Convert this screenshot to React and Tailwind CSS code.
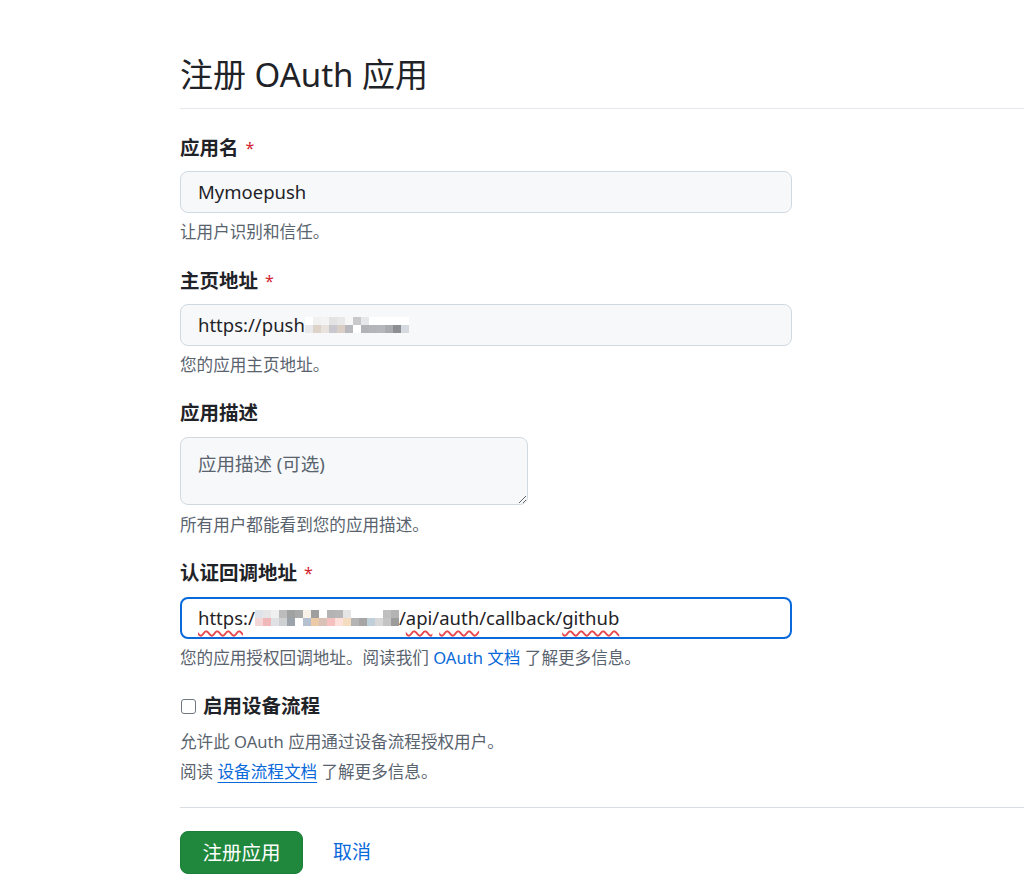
import { useState } from 'react';

// mosaic blocks standing in for the blurred part of the urls
function Pixelate({ rows }) {
  return (
    <span className="inline-flex flex-col align-middle">
      {rows.map((row, i) => (
        <span key={i} className="flex">
          {row.map((c, j) => (
            <span key={j} className="w-[8px] h-[8px]" style={{ backgroundColor: c }} />
          ))}
        </span>
      ))}
    </span>
  );
}

const homeBlur = [
  ['#ffffff', '#f1f1f1', '#f4f4f4', '#e3e3e3', '#e8e8e8', '#f7f7f7', '#c9c9cc', '#e5e7ea', '#ffffff', '#ffffff', '#ffffff', '#ffffff', '#ffffff'],
  ['#e9e9ec', '#ddd3c8', '#e9e3e0', '#c8c8ce', '#dacfc7', '#b9b9bd', '#ffffff', '#b1b3b8', '#b4b5b9', '#b6b7bc', '#a9abaf', '#8c8e92', '#d5d9e0'],
];

const cbBlur = [
  ['#dfe3ea', '#e6e6e6', '#f0f0f0', '#bcbcbc', '#a0a2a2', '#a9aaaa', '#f7f1e7', '#9f9f9f', '#ffffff', '#b4b4b4', '#b6b6b6', '#e5e5e5', '#ffffff', '#ffffff', '#ffffff', '#ffffff', '#bfbfbf', '#b4b4b4'],
  ['#f3d6d6', '#f0b8b8', '#dfe1e4', '#cfd0d2', '#9da3ad', '#ffffff', '#b5c1d0', '#eccaa8', '#d8c2b8', '#f5c0c0', '#fde0dc', '#f3dcc0', '#b4b4b4', '#a6a6a6', '#bfd0da', '#d8d8d8', '#c4c4c4', '#9c9c9c'],
];

function Label({ children, required }) {
  return (
    <label className="block text-[19.5px] leading-[28px] font-bold text-[#1f2328]">
      {children}
      {required && <span className="ml-[7px] text-[16px] font-normal text-[#d1242f] align-top">*</span>}
    </label>
  );
}

function Hint({ children, className = '' }) {
  return <p className={`text-[16.6px] leading-[24px] text-[#59636e] ${className}`}>{children}</p>;
}

const wavy = 'underline decoration-wavy decoration-[#e5484d] decoration-[1.5px] underline-offset-[5px]';

export default function App() {
  const [deviceFlow, setDeviceFlow] = useState(false);

  return (
    <div className="min-h-screen bg-white pl-[180px] font-['Noto_Sans','Noto_Sans_CJK_SC',sans-serif] text-[#1f2328]">
      <h1 className="pt-[51px] pb-[9px] border-b border-[#e5e8ec] text-[33px] leading-[48px] font-normal">
        注册 OAuth 应用
      </h1>

      <form className="w-[612px]" onSubmit={(e) => e.preventDefault()}>
        {/* App name */}
        <div className="mt-[25px]">
          <Label required>应用名</Label>
          <div className="mt-[9px] h-[42px] flex items-center px-[17px] rounded-[8px] border border-[#d1d9e0] bg-[#f6f8fa] text-[18.5px]">
            Mymoepush
          </div>
          <Hint className="mt-[7px]">让用户识别和信任。</Hint>
        </div>

        {/* Homepage */}
        <div className="mt-[23px]">
          <Label required>主页地址</Label>
          <div className="mt-[9px] h-[42px] flex items-center px-[17px] rounded-[8px] border border-[#d1d9e0] bg-[#f6f8fa] text-[18.5px]">
            <span>https://push</span>
            <Pixelate rows={homeBlur} />
          </div>
          <Hint className="mt-[7px]">您的应用主页地址。</Hint>
        </div>

        {/* Description */}
        <div className="mt-[22px]">
          <Label>应用描述</Label>
          <textarea
            placeholder="应用描述 (可选)"
            className="mt-[10px] block w-[348px] h-[68px] px-[17px] pt-[12px] rounded-[8px] border border-[#d1d9e0] bg-[#f6f8fa] text-[18.5px] leading-[28px] placeholder:text-[#59636e] outline-none"
          />
          <Hint className="mt-[8px]">所有用户都能看到您的应用描述。</Hint>
        </div>

        {/* Callback */}
        <div className="mt-[22px]">
          <Label required>认证回调地址</Label>
          <div className="mt-[10px] h-[42px] flex items-center px-[16px] rounded-[8px] border-2 border-[#0969da] bg-white text-[18.5px]">
            <span className={wavy}>https</span>
            <span>:/</span>
            <Pixelate rows={cbBlur} />
            <span>/</span>
            <span className={wavy}>api</span>
            <span>/</span>
            <span className={wavy}>auth</span>
            <span>/callback/</span>
            <span className={wavy}>github</span>
          </div>
          <Hint className="mt-[7px]">
            您的应用授权回调地址。阅读我们 <a href="#" className="text-[#0969da]">OAuth 文档</a> 了解更多信息。
          </Hint>
        </div>

        {/* Device flow */}
        <div className="mt-[22px]">
          <label className="flex items-center gap-[7px] cursor-pointer" onClick={() => setDeviceFlow(!deviceFlow)}>
            <span
              className={`ml-[1px] w-[15px] h-[15px] rounded-[3px] border ${deviceFlow ? 'bg-[#0969da] border-[#0969da]' : 'border-[#6e7781] bg-white'}`}
            />
            <span className="text-[19.5px] leading-[28px] font-bold">启用设备流程</span>
          </label>
          <Hint className="mt-[10px]">允许此 OAuth 应用通过设备流程授权用户。</Hint>
          <Hint className="mt-[6px]">
            阅读 <a href="#" className="text-[#0969da] underline underline-offset-[4px]">设备流程文档</a> 了解更多信息。
          </Hint>
        </div>
      </form>

      <div className="mt-[23px] border-t border-[#d8dee4]" />

      <div className="mt-[23px] flex items-center gap-[30px]">
        <button className="w-[123px] h-[43px] rounded-[8px] bg-[#1f883d] border border-[#1a7f37] text-white text-[19.5px]">
          注册应用
        </button>
        <a href="#" className="text-[#0969da] text-[19px]">取消</a>
      </div>
    </div>
  );
}
